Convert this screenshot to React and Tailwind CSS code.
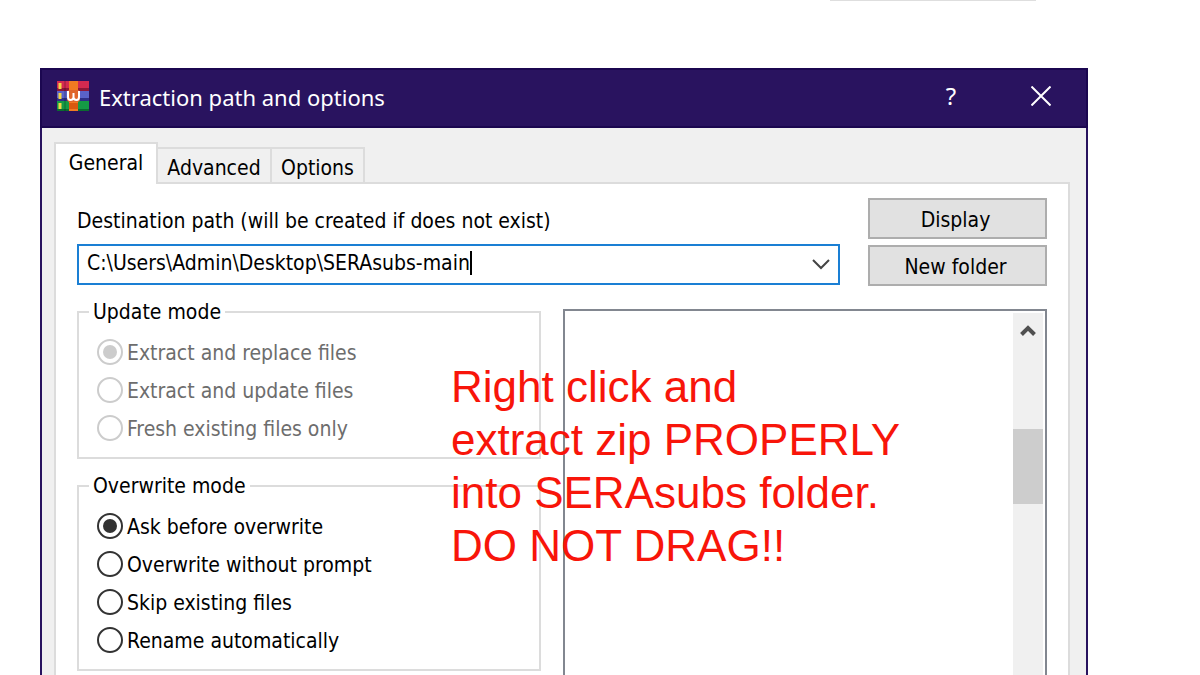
const updateModes = [
    { id: 'replace', label: 'Extract and replace files' },
    { id: 'update', label: 'Extract and update files' },
    { id: 'fresh', label: 'Fresh existing files only' },
];

const overwriteModes = [
    { id: 'ask', label: 'Ask before overwrite' },
    { id: 'overwrite', label: 'Overwrite without prompt' },
    { id: 'skip', label: 'Skip existing files' },
    { id: 'rename', label: 'Rename automatically' },
];

export default function App() {
    return (
        <div className="flex h-screen flex-col overflow-hidden bg-white font-['DejaVu_Sans_Condensed','Noto_Sans',sans-serif] text-[21px] text-black">
            {/* Edge of the window above */}
            <div className="flex shrink-0 justify-end pr-[164px]">
                <div className="h-px w-[206px] bg-[#dedede]"></div>
            </div>

            <main className="relative mt-[67px] mr-28 ml-10 flex min-h-0 flex-1 flex-col">
                <TitleBar />

                <div className="flex flex-1 flex-col border-x-2 border-[#28135f] bg-[#f0f0f0] pt-3.5 pr-4 pl-3">
                    <Tabs />
                    <section className="flex flex-1 flex-col border-x-2 border-t-2 border-[#dcdcdc] bg-white px-[21px] pt-3.5">
                        <div className="flex gap-7">
                            <Destination />
                            <div className="flex w-[179px] flex-col gap-1.5">
                                <PushButton>Display</PushButton>
                                <PushButton>New folder</PushButton>
                            </div>
                        </div>

                        <div className="mt-[11px] grid flex-1 grid-cols-[464fr_484fr] gap-[22px]">
                            <div className="flex flex-col gap-3">
                                <RadioGroup title="Update mode" name="update" options={updateModes} selected="replace" disabled />
                                <RadioGroup title="Overwrite mode" name="overwrite" options={overwriteModes} selected="ask" />
                            </div>
                            <FolderTree />
                        </div>
                    </section>
                </div>

                {/* Annotation */}
                <p className="absolute top-[292px] left-[411px] font-['Liberation_Sans',Arial,sans-serif] text-[44px] leading-[53px] whitespace-nowrap text-[#f8150a]">
                    Right click and<br />
                    extract zip PROPERLY<br />
                    into SERAsubs folder.<br />
                    DO NOT DRAG!!
                </p>
            </main>
        </div>
    );
}

function TitleBar() {
    return (
        <header className="flex h-[60px] shrink-0 items-center border-2 border-[#1b0750] bg-[#29135f] pb-1 pl-[15px] font-['Noto_Sans',sans-serif] text-white">
            <ArchiveIcon />
            <h1 className="ml-2.5 flex-1 pt-0.5 text-[22px]">Extraction path and options</h1>
            <button type="button" aria-label="Help" className="w-[88px] text-center text-2xl">?</button>
            <button type="button" aria-label="Close" className="flex w-[91px] justify-center">
                <svg className="h-5 w-5" viewBox="0 0 20 20" fill="none" stroke="currentColor" strokeWidth="2">
                    <path d="M0.5 0.5L19.5 19.5M19.5 0.5L0.5 19.5" />
                </svg>
            </button>
        </header>
    );
}

function Tabs() {
    return (
        <div role="tablist" className="flex items-end">
            <button type="button" role="tab" aria-selected="true" className="relative -mb-0.5 h-[42px] w-[104px] border-x-2 border-t-2 border-[#dcdcdc] bg-white">
                General
            </button>
            <button type="button" role="tab" aria-selected="false" className="h-[35px] w-[114px] border-t-2 border-r-2 border-[#dcdcdc] pt-1">
                Advanced
            </button>
            <button type="button" role="tab" aria-selected="false" className="h-[35px] w-[93px] border-t-2 border-r-2 border-[#dcdcdc] pt-1">
                Options
            </button>
        </div>
    );
}

function Destination() {
    return (
        <div className="min-w-0 flex-1">
            <label htmlFor="path" className="block leading-[46px] whitespace-nowrap">
                Destination path (will be created if does not exist)
            </label>
            <div className="flex h-[41px] items-center border-2 border-[#1a7fd4] bg-white pb-1 pl-2">
                <input id="path" type="text" defaultValue="C:\Users\Admin\Desktop\SERAsubs-main" className="field-sizing-content h-8 outline-none" />
                <span className="h-6 w-0.5 bg-black"></span>
                <button type="button" aria-label="Show recent paths" className="ml-auto pr-[7px]">
                    <svg className="h-5 w-5" viewBox="0 0 20 20" fill="none" stroke="#444" strokeWidth="2">
                        <path d="M2 7L10 15L18 7" />
                    </svg>
                </button>
            </div>
        </div>
    );
}

function PushButton({ children }) {
    return (
        <button type="button" className="h-[41px] border-2 border-[#adadad] bg-[#e1e1e1] pt-1 pr-1">
            {children}
        </button>
    );
}

function RadioGroup({ title, name, options, selected, disabled }) {
    return (
        <fieldset disabled={disabled} className="border-2 border-[#dcdcdc] px-[18px] pt-1.5 pb-2.5">
            <legend className="-ml-2 px-1 leading-[30px]">{title}</legend>
            {options.map((option) => (
                <label key={option.id} className="flex h-[38px] items-center gap-1 has-disabled:text-[#6d6d6d]">
                    <input
                        type="radio"
                        name={name}
                        defaultChecked={option.id === selected}
                        className="h-[26px] w-[26px] shrink-0 appearance-none rounded-full border-2 border-[#333] bg-white bg-clip-content p-1 checked:bg-[#333] disabled:border-[#ccc] disabled:checked:bg-[#ccc]"
                    />
                    <span className="pt-1 whitespace-nowrap">{option.label}</span>
                </label>
            ))}
        </fieldset>
    );
}

function FolderTree() {
    return (
        <div className="mt-3 flex justify-end border-x-2 border-t-2 border-[#828790] bg-white pt-0.5 pr-0.5">
            <div className="w-[30px] bg-[#f0f0f0]">
                <button type="button" aria-label="Scroll up" className="flex h-[34px] w-full items-center justify-center">
                    <svg className="h-4 w-4" viewBox="0 0 16 16" fill="none" stroke="#505050" strokeWidth="4">
                        <path d="M1.5 12.5L8 6L14.5 12.5" />
                    </svg>
                </button>
                <div className="mt-[82px] h-[75px] bg-[#cdcdcd]"></div>
            </div>
        </div>
    );
}

// Three stacked books held by a belt
function ArchiveIcon() {
    return (
        <svg className="h-[30px] w-8" viewBox="0 0 32 30">
            <rect width="32" height="9" fill="#d42a50" />
            <rect y="7" width="32" height="3" fill="#8e1738" />
            <rect y="10" width="32" height="9" fill="#5a62c8" />
            <rect y="17" width="32" height="3" fill="#2f2f86" />
            <rect y="20" width="32" height="10" fill="#159a45" />
            <rect y="28" width="32" height="2" fill="#0b6b30" />
            <path d="M3 2v6M3 12v6M3 22v6" stroke="#f2d648" strokeWidth="3" />
            <path d="M8 0v30" stroke="#000" strokeOpacity="0.15" strokeWidth="2" />
            <rect x="12" width="9" height="30" fill="#f07a22" />
            <rect x="12" y="22" width="9" height="6" fill="#d9580f" />
            <rect x="10" y="9" width="13" height="12" rx="3" fill="#e0662a" />
            <path d="M11 10v6q0 3 2.5 3t3-2.500q0.500 2.500 3 2.500t2.500-3v-6M16.500 12v5" fill="none" stroke="#fff" strokeWidth="2" />
        </svg>
    );
}
